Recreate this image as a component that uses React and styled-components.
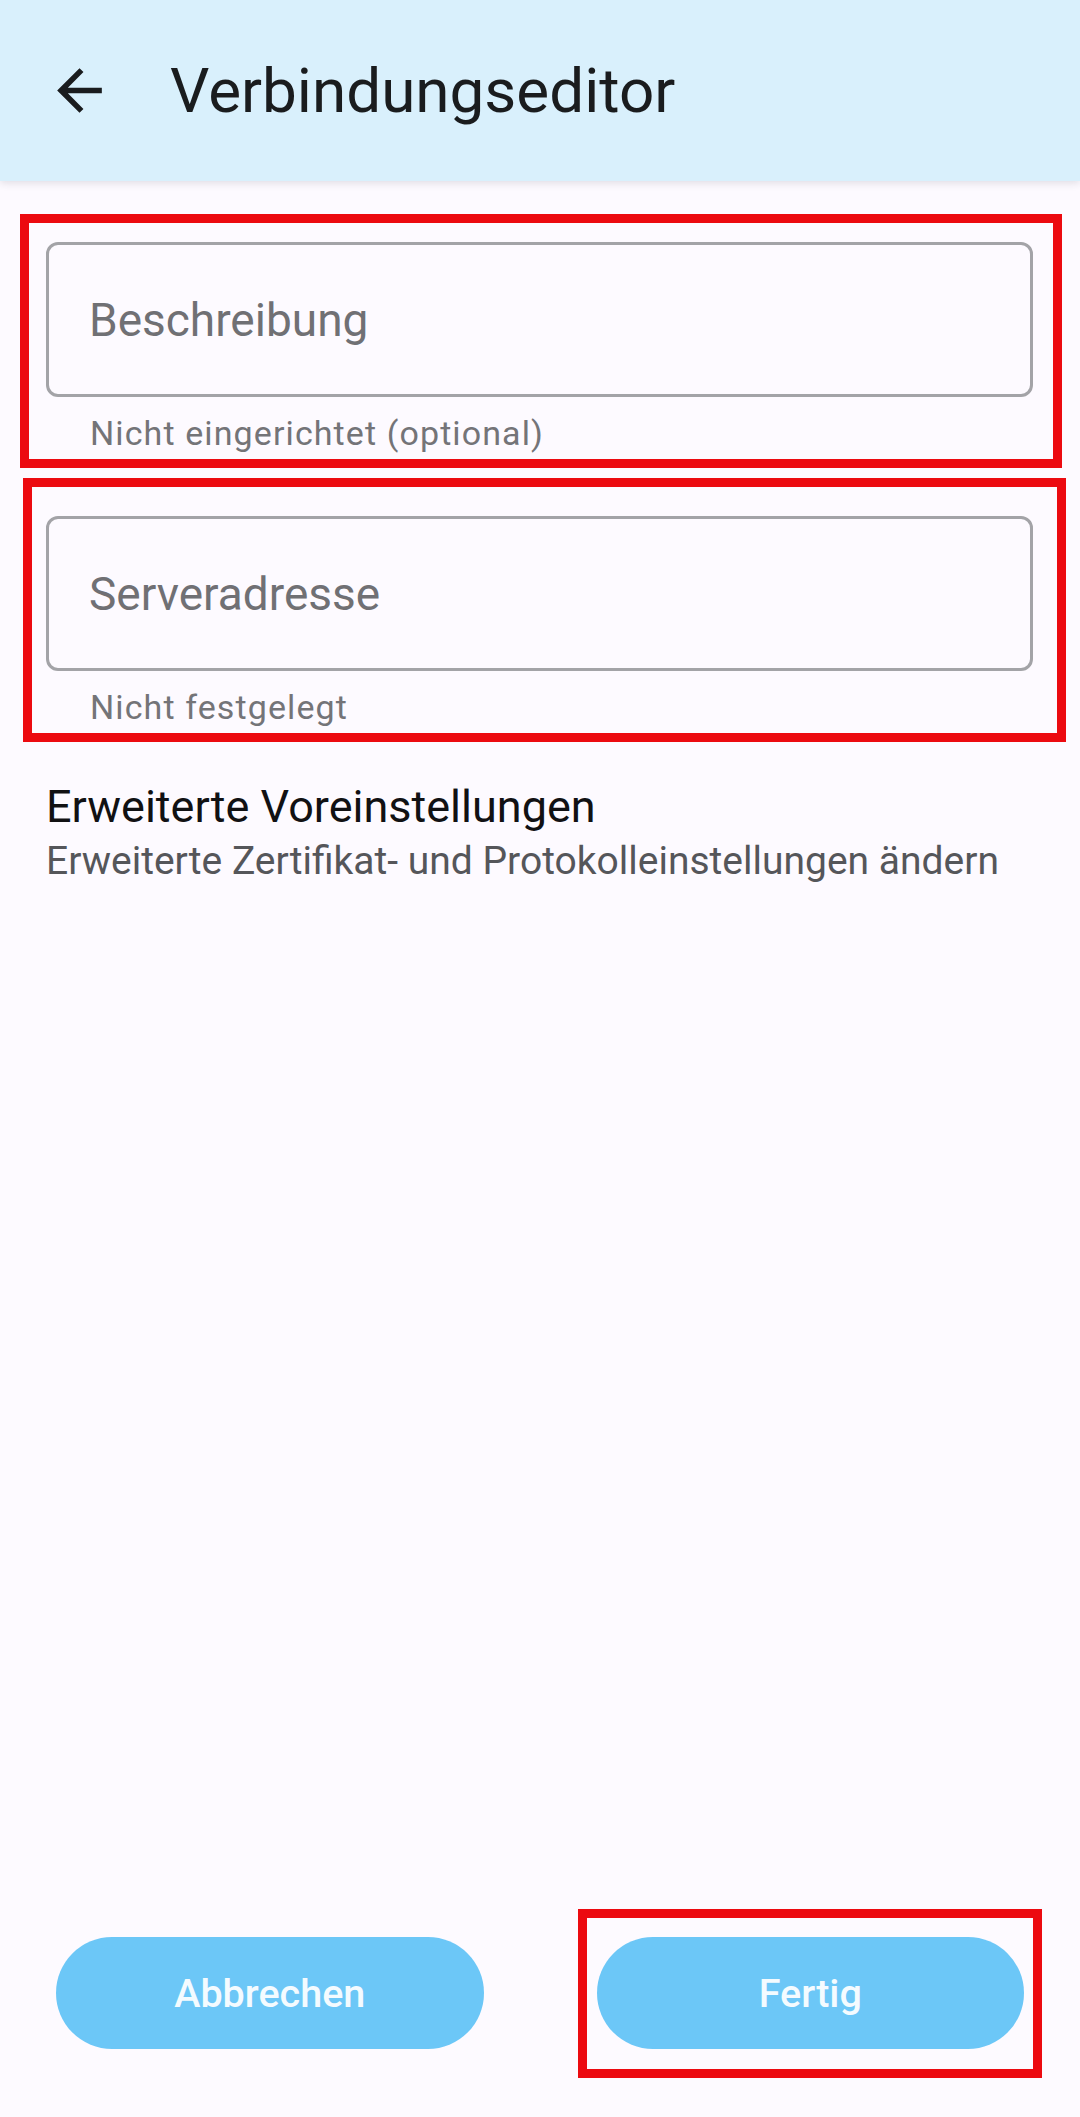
import React from "react"
import styled, { createGlobalStyle } from "styled-components"

const GlobalStyle = createGlobalStyle`
  html, body {
    margin: 0;
    padding: 0;
    background: #fdfaff;
  }
  body {
    font-family: Roboto, "Noto Sans", sans-serif;
    -webkit-font-smoothing: antialiased;
  }
  * {
    box-sizing: border-box;
  }
`

const Screen = styled.div`
  display: flex;
  flex-direction: column;
  min-height: 100vh;
  background: #fdfaff;
`

const TopBar = styled.header`
  display: flex;
  align-items: center;
  height: 181px;
  padding-left: 46px;
  background: #d9f0fc;
  box-shadow: 0 2px 8px rgba(40, 40, 60, 0.14);
  position: relative;
  z-index: 1;
`

const BackButton = styled.button`
  display: flex;
  align-items: center;
  justify-content: center;
  width: 67px;
  height: 67px;
  padding: 0;
  border: none;
  background: none;
  color: #1a1c1e;
`

const Title = styled.h1`
  margin: 0 0 0 57px;
  font-size: 62px;
  font-weight: 400;
  color: #1a1c1e;
  letter-spacing: 0;
`

const Form = styled.main`
  display: flex;
  flex-direction: column;
  padding: 61px 47px 0 46px;
  gap: 61px;
`

const FieldGroup = styled.div`
  position: relative;
  display: flex;
  flex-direction: column;
`

const Outline = styled.label`
  display: flex;
  align-items: center;
  height: 155px;
  padding-left: 40px;
  border: 3px solid #a3a3a7;
  border-radius: 12px;
`

const Placeholder = styled.span`
  font-size: 46px;
  color: #707074;
`

const Helper = styled.span`
  margin-top: 14px;
  padding-left: 44px;
  font-size: 34px;
  line-height: 44px;
  color: #747478;
  letter-spacing: 1.1px;
`

// red marker frame drawn over a highlighted control
const Marker = styled.span`
  position: absolute;
  top: ${p => p.$top}px;
  bottom: ${p => p.$bottom}px;
  left: ${p => p.$left}px;
  right: ${p => p.$right}px;
  border: 9px solid #ec0a10;
  pointer-events: none;
`

const Preference = styled.div`
  display: flex;
  flex-direction: column;
  padding: 48px 46px 0;
`

const PrefTitle = styled.span`
  font-size: 45px;
  line-height: 60px;
  color: #111113;
`

const PrefSummary = styled.span`
  font-size: 39px;
  line-height: 48px;
  color: #55565a;
`

const Actions = styled.footer`
  display: flex;
  gap: 113px;
  margin-top: auto;
  padding: 0 56px 68px;
`

const ActionSlot = styled.div`
  position: relative;
  flex: 1;
  display: flex;
`

const PillButton = styled.button`
  flex: 1;
  height: 112px;
  border: none;
  border-radius: 56px;
  background: #6cc7f7;
  color: #f4fbff;
  font-family: Roboto, "Noto Sans", sans-serif;
  font-size: 39.5px;
  font-weight: 500;
`

const ArrowBack = () => (
  <svg width="67" height="67" viewBox="0 0 24 24" fill="currentColor">
    <path d="M20 11H7.83l5.59-5.59L12 4l-8 8 8 8 1.41-1.41L7.83 13H20v-2z" />
  </svg>
)

const App = () => {
  return (
    <>
      <GlobalStyle />
      <Screen>
        <TopBar>
          <BackButton aria-label="Zurück">
            <ArrowBack />
          </BackButton>
          <Title>Verbindungseditor</Title>
        </TopBar>

        <Form>
          <FieldGroup>
            <Outline>
              <Placeholder>Beschreibung</Placeholder>
            </Outline>
            <Helper>Nicht eingerichtet (optional)</Helper>
            <Marker $top={-28} $bottom={-13} $left={-26} $right={-29} />
          </FieldGroup>

          <FieldGroup>
            <Outline>
              <Placeholder>Serveradresse</Placeholder>
            </Outline>
            <Helper>Nicht festgelegt</Helper>
            <Marker $top={-38} $bottom={-13} $left={-23} $right={-33} />
          </FieldGroup>
        </Form>

        <Preference>
          <PrefTitle>Erweiterte Voreinstellungen</PrefTitle>
          <PrefSummary>Erweiterte Zertifikat- und Protokolleinstellungen ändern</PrefSummary>
        </Preference>

        <Actions>
          <ActionSlot>
            <PillButton>Abbrechen</PillButton>
          </ActionSlot>
          <ActionSlot>
            <PillButton>Fertig</PillButton>
            <Marker $top={-28} $bottom={-29} $left={-19} $right={-18} />
          </ActionSlot>
        </Actions>
      </Screen>
    </>
  )
}

export default App
